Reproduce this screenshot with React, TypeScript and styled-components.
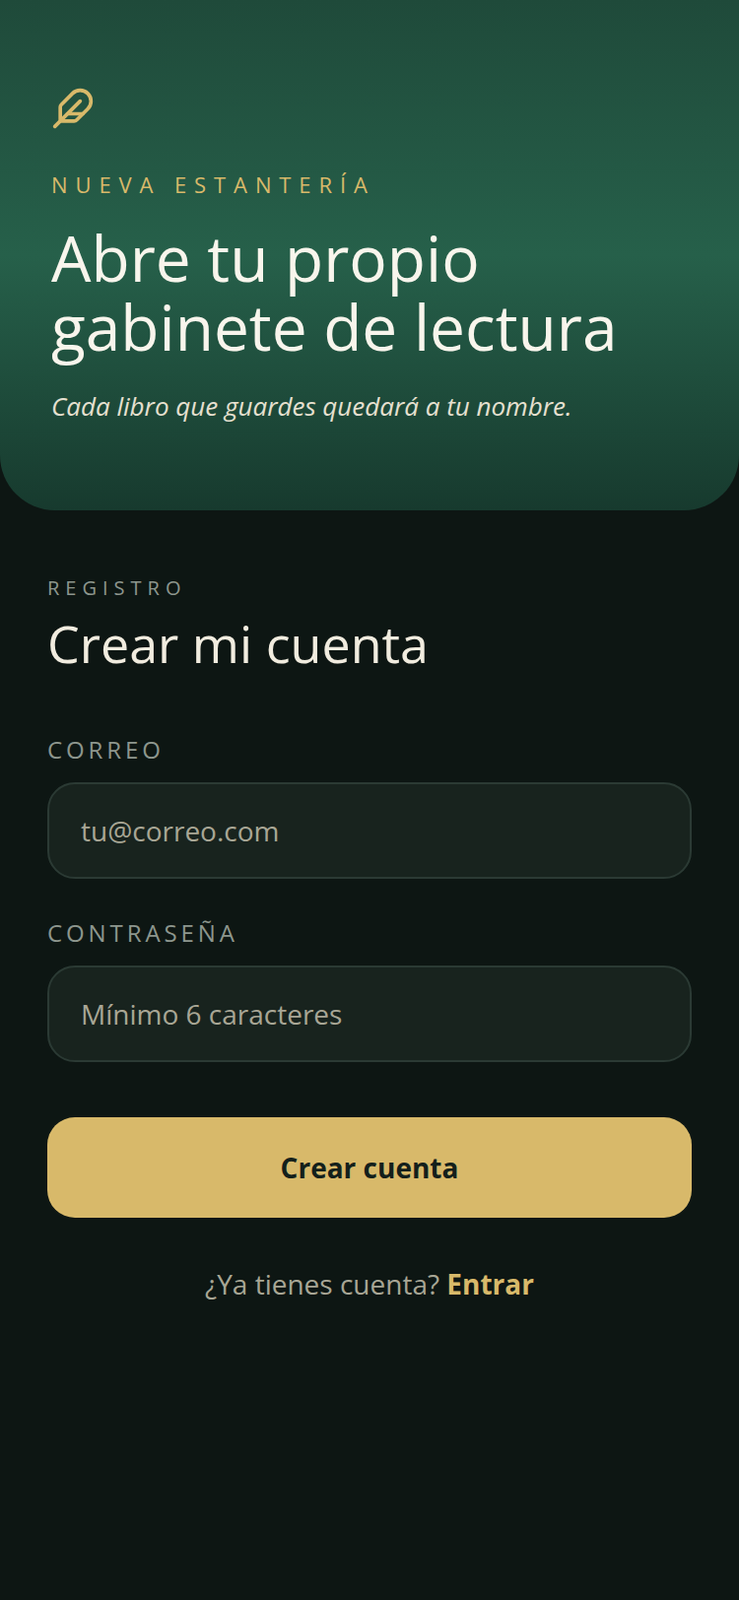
import React from 'react';
import styled, { createGlobalStyle } from 'styled-components';
import { Feather } from 'lucide-react';

const GlobalStyle = createGlobalStyle`
  html, body {
    margin: 0;
    padding: 0;
    background: #0d1613;
  }
  * { box-sizing: border-box; }
`;

const Page = styled.main`
  width: 750px;
  min-height: 1624px;
  background: #0d1613;
  font-family: 'Open Sans', sans-serif;
`;

const Hero = styled.header`
  height: 518px;
  padding: 88px 52px 0;
  border-radius: 0 0 56px 56px;
  background: linear-gradient(180deg, #1f4a3a 0%, #26604a 50%, #173a2e 100%);
`;

const FeatherMark = styled(Feather)`
  display: block;
`;

const Eyebrow = styled.p`
  margin: 40px 0 0;
  font-size: 22px;
  line-height: 30px;
  letter-spacing: 7.9px;
  color: #d8b96a;
`;

const HeroTitle = styled.h1`
  margin: 25px 0 0;
  font-size: 64px;
  line-height: 70.4px;
  font-weight: 400;
  color: #f8f5ec;
`;

const Tagline = styled.p`
  margin: 27px 0 0;
  font-size: 26px;
  line-height: 34px;
  font-style: italic;
  color: #e6e0d0;
`;

const FormSection = styled.section`
  padding: 65px 48px 0;
`;

const Kicker = styled.p`
  margin: 0;
  font-size: 20px;
  line-height: 28px;
  letter-spacing: 6px;
  color: #8d968e;
`;

const FormTitle = styled.h2`
  margin: 9px 0 0;
  font-size: 52px;
  line-height: 66px;
  font-weight: 400;
  color: #f1ecdf;
`;

const Form = styled.form`
  display: flex;
  flex-direction: column;
  margin-top: 59px;
`;

const Field = styled.label`
  display: block;
  margin-bottom: 39px;
`;

const FieldLabel = styled.span`
  display: block;
  margin-bottom: 17px;
  font-size: 24px;
  line-height: 32px;
  letter-spacing: 3.9px;
  color: #8d968e;
`;

const Input = styled.input`
  display: block;
  width: 100%;
  height: 98px;
  padding: 0 32px;
  border: 2px solid #2b3a34;
  border-radius: 28px;
  outline: none;
  background: #18231e;
  font-family: inherit;
  font-size: 28px;
  color: #f1ecdf;

  &::placeholder {
    color: #a8a695;
    opacity: 1;
  }
`;

const Submit = styled.button`
  height: 102px;
  margin-top: 17px;
  border: none;
  border-radius: 28px;
  background: #d8b96a;
  font-family: inherit;
  font-size: 28px;
  font-weight: 700;
  color: #14201b;
`;

const Footer = styled.p`
  margin: 48px 0 0;
  text-align: center;
  font-size: 28px;
  line-height: 38px;
  color: #a8a695;
`;

const FooterLink = styled.a`
  font-weight: 700;
  color: #d8b96a;
`;

const App = () => {
  return (
    <Page>
      <GlobalStyle />
      <Hero>
        <FeatherMark size={44} color="#d8b96a" strokeWidth={2} />
        <Eyebrow>NUEVA ESTANTERÍA</Eyebrow>
        <HeroTitle>
          Abre tu propio
          <br />
          gabinete de lectura
        </HeroTitle>
        <Tagline>Cada libro que guardes quedará a tu nombre.</Tagline>
      </Hero>
      <FormSection>
        <Kicker>REGISTRO</Kicker>
        <FormTitle>Crear mi cuenta</FormTitle>
        <Form>
          <Field>
            <FieldLabel>CORREO</FieldLabel>
            <Input type="email" placeholder="tu@correo.com" />
          </Field>
          <Field>
            <FieldLabel>CONTRASEÑA</FieldLabel>
            <Input type="password" placeholder="Mínimo 6 caracteres" />
          </Field>
          <Submit type="button">Crear cuenta</Submit>
        </Form>
        <Footer>
          ¿Ya tienes cuenta? <FooterLink>Entrar</FooterLink>
        </Footer>
      </FormSection>
    </Page>
  );
};

export default App;
